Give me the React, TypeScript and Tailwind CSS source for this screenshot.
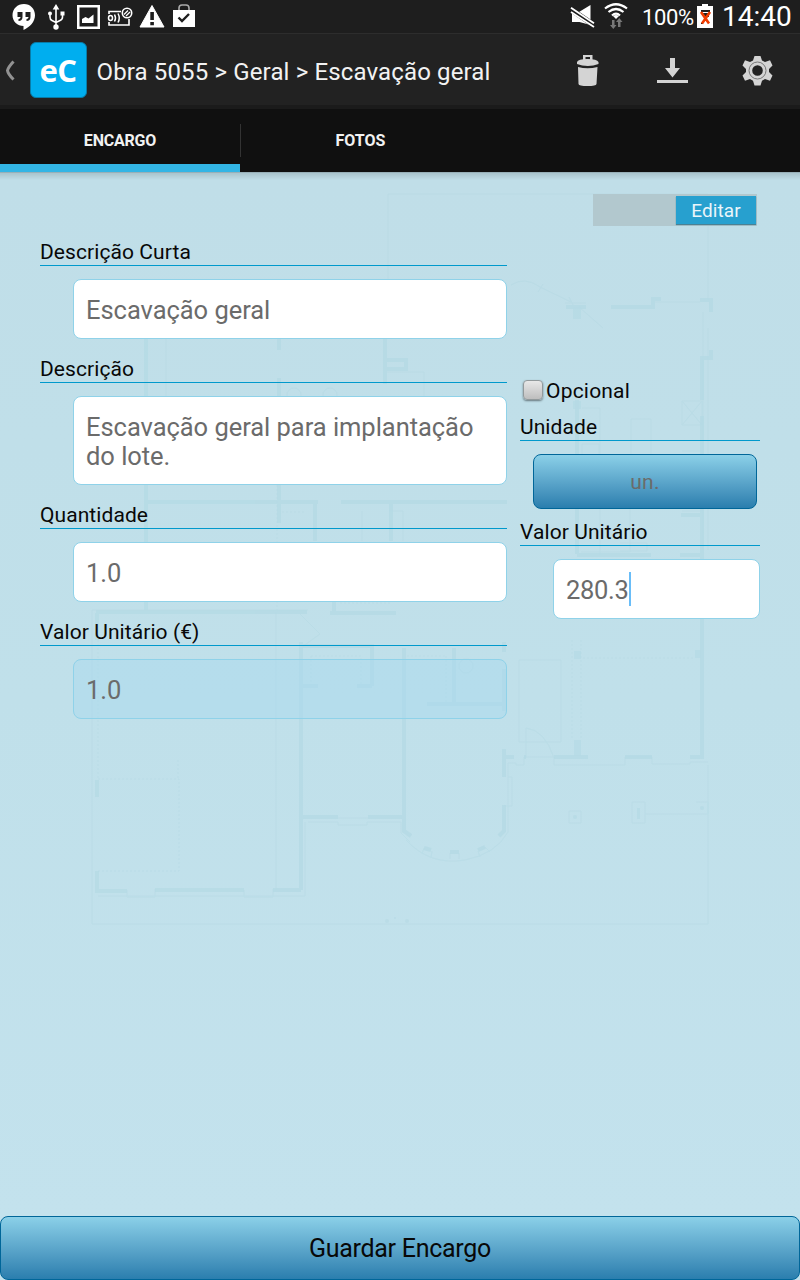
import React from "react";

function PlanBackdrop() {
  return (
    <svg
      className="pointer-events-none absolute left-0 top-0 opacity-75"
      width="800"
      height="1044"
      viewBox="0 172 800 1044"
      fill="none"
      stroke="#b2d9e4"
      aria-hidden="true"
    >
      <g strokeWidth="4" opacity="0.8">
        <path d="M146 339V612M146 502H318M341 502H507M96 612H307M97 613V640" />
        <path d="M279 339V350M279 378V396M279 485V523M385 339V384M385 360H406V369H386M315 502V541M391 502V541" />
        <path d="M334 602V612M330 613H396M301 642V890M302 646H372V686M302 686H318M357 686H372M404 648V831L411 836M454 648V704M427 704H502" />
        <path d="M302 817H338M368 817H404M97 780V797M97 871V891H127M155 890H244M273 890H301" />
        <path d="M504 642V652M504 669V711M504 749V777M504 805V831L499 836M504 757H514M524 757H526M554 757H588M625 757H652M690 757H702V416" />
        <path d="M566 307H586M611 307H653V299H661M700 300H711V312M711 350V358H702V400M577 555H651M680 555H702M681 515H702" />
        <path d="M577 400V554M424 848L431 850M450 852H459M478 850L485 847" />
      </g>
      <g fill="#b2d9e4" stroke="none" opacity="0.7">
        <path d="M573 307h8v12h-8zM574 651h7v8h-7zM695 650h6v8h-6zM574 740h7v16h-7zM573 401h8v8h-8zM637 808h3v11h-3z" />
        <circle cx="575" cy="817" r="2" />
        <circle cx="702" cy="808" r="2" />
      </g>
      <g strokeWidth="1" opacity="0.55">
        <path d="M388 194H708V300M388 194V279M708 765V924H92V610H308M166 339V396M276 612V890M389 511H403V541M362 511V541" />
        <path d="M308 822H338V825H367V822H401V833L410 842M508 832V763H516V765H524V757H554V765H588V765H625V757H652V764H690V762H708" />
        <path d="M338 818H368M127 890V897H155V889M244 890V897H273V889M98 896H305V822M508 777H512V806H504" />
        <path d="M511 285Q525 276 540 287L571 302M543 284l-5 8M579 307l24 21M569 297l4 8M565 303h21M655 302h45M703 312v238M708 328v222" />
        <path d="M582 408H600V555M631 419h20v72h-20zM682 401h20v24h-20zM682 401l20 24M702 401l-20 24M582 444h17v30h-17z" />
        <path d="M581 501H630V552H581M620 543h27v8h-27M682 451h20v60h-20M519 660h42v82h-42zM526 758V728Q545 730 554 758" />
        <path d="M569 811h12v12h-12zM632 802h13v21h-13zM696 802h12v12h-12M645 814H696" />
        <path d="M406 840Q430 866 465 860Q496 854 508 832M424 848l-2 6M432 851l-1 7M450 853v6M459 853v6M478 851l2 6M485 847l5 5" />
        <path d="M387 372h37v27h-37M300 614l20 20l-18 13" />
        <circle cx="294" cy="395" r="7" />
        <circle cx="330" cy="395" r="7" />
        <circle cx="466" cy="666" r="7" />
      </g>
      <g strokeWidth="1" strokeDasharray="2 2" opacity="0.5">
        <path d="M98 779H179V871H98M98 640V780M178 760v18M311 656H361V685M311 656V685M446 656V704M407 656H446M277 485V610M581 640V740M572 640V740M282 512H305M340 603H390M583 658H695" />
      </g>
      <g stroke="none" fill="#aed5e0" opacity="0.45">
        <circle cx="387" cy="921" r="2" />
        <circle cx="395" cy="918" r="1" />
        <circle cx="407" cy="921" r="2" />
      </g>
    </svg>
  );
}

function StatusBar() {
  return (
    <header className="flex h-[33px] shrink-0 items-center justify-between bg-[#1e1e1e] text-white">
      <svg width="200" height="33" viewBox="0 0 200 33" fill="#fff">
        <path d="M24 4C17.500 4 12.500 8.800 12.500 15.200C12.500 21.500 17.500 26 23.500 26V30C30 27 35 21.500 35 15.200C35 8.800 30.200 4 24 4Z" />
        <path d="M17.500 12h5v5c0 2.500-1.500 4-4 4v-2c1.300 0 2-.8 2-2h-3zM25.500 12h5v5c0 2.500-1.500 4-4 4v-2c1.300 0 2-.8 2-2h-3z" fill="#1e1e1e" />
        <g fill="none" stroke="#fff" strokeWidth="1.600">
          <path d="M56 8V26M50 14V17Q50 19.500 52 20.500L56 22.500M62.500 14V17Q62.500 19.500 60 20.500L56 22.500" />
        </g>
        <path d="M56 4l3.300 5.500h-6.600zM60.500 11.500h4v4h-4z" />
        <circle cx="50" cy="13.500" r="2" />
        <circle cx="56" cy="27" r="2.700" />
        <path fillRule="evenodd" d="M77 5h23v24H77zM79.500 7.500v19h18v-19z" />
        <path d="M82 23v-4l3.500-2 3 1.500 5-4V23z" />
        <g fill="none" stroke="#fff" strokeWidth="1.600">
          <path d="M121 11.500H109V14M109 22V25H129V19" />
          <ellipse cx="110.500" cy="18" rx="2" ry="2.500" strokeWidth="1.500" />
          <path d="M114.500 14.500q2 3.500 0 7M118 13.500q2.500 4.500 0 9" strokeWidth="1.500" />
          <circle cx="127" cy="13" r="4.700" />
          <path d="M124 14.500l4-4M126 16l4-4" strokeWidth="1.300" />
        </g>
        <path d="M152 5.500L164 27H140Z" strokeLinejoin="round" stroke="#fff" />
        <path d="M150.300 12h3.600v8h-3.600zM150.300 22h3.600v3.200h-3.600z" fill="#1e1e1e" />
        <path d="M173 10h22v17h-22z" />
        <path d="M179 10V8q0-3 3-3h4q3 0 3 3v2" fill="none" stroke="#aaa" strokeWidth="1.600" />
        <path d="M178.500 17.500l3.500 3.500 7-7" fill="none" stroke="#1e1e1e" strokeWidth="2.400" />
      </svg>
      <div className="flex h-full items-center font-[Roboto,sans-serif]">
        <svg width="68" height="33" viewBox="565 0 68 33" fill="#fff">
          <path d="M572 12h7L590.500 5v20l-11-3h-7.500z" />
          <path d="M571 9.500l22 15" stroke="#1e1e1e" strokeWidth="5.500" />
          <path d="M571 7.700l23 15.500M571 12l23 15" stroke="#fff" strokeWidth="1.900" />
          <g fill="none" stroke="#fff" strokeWidth="2.200">
            <path d="M605 8.500Q616 0 627 8.500M608.500 12Q616 6 623.500 12M612 15.500Q616 11.800 620 15.500" />
          </g>
          <path d="M616 19l-3-3q3-2 6 0z" />
          <path d="M612 20h2.500v5h2l-3.200 4-3.300-4h2zM618 27h2.500v-5h2l-3.200-4-3.300 4h2z" fill="#777" />
        </svg>
        <span className="ml-[9px] w-[53px] whitespace-nowrap pt-[2px] text-[22px] leading-8 tracking-[-0.35px]">100%</span>
        <svg className="ml-[2px]" width="16" height="33" viewBox="697 0 16 33">
          <path d="M697 6h5V4h6v2h5v22h-16z" fill="#fff" />
          <path d="M701 10h9v2h-9zM703 13h6v4h-6zM701 23h2v1h-2z" fill="#222" />
          <path d="M701 12l8 11.500M710 12l-8 11.500" stroke="#f03c00" strokeWidth="2.600" />
        </svg>
        <time className="ml-[9px] w-[78px] whitespace-nowrap text-[28px] leading-8">14:40</time>
      </div>
    </header>
  );
}

function ActionBar() {
  return (
    <div className="flex h-[76px] shrink-0 border-b-4 border-t border-b-[#1b1b1b] border-t-[#2d2d2d] bg-[#222]">
      <div className="flex h-full w-[96.500px] items-center">
        <svg width="29.500" height="70" viewBox="0 35 29.500 70">
          <path d="M13.500 61.500Q8 67.500 7.500 70.500Q8 74 13.500 79.500" fill="none" stroke="#929292" strokeWidth="3" />
        </svg>
        <div className="flex h-[56px] w-[57px] items-center justify-center rounded-[6px] border border-[#087ca8] bg-[#00aeef]">
          <span className="pt-px font-['Open_Sans',sans-serif] text-[31px] font-bold leading-none tracking-[-0.5px] text-white">eC</span>
        </div>
      </div>
      <h1 className="flex flex-1 items-center whitespace-nowrap pt-[5px] font-[Roboto,sans-serif] text-[24px] leading-8 tracking-[0.14px] text-[#f2f2f2]">
        Obra 5055 &gt; Geral &gt; Escavação geral
      </h1>
      <svg width="250" height="71" viewBox="550 34 250 71" fill="#d4d4d4">
        <path fillRule="evenodd" d="M583 60v-5h9.500v5zM585.500 57v2.500h4.500V57z" />
        <path d="M577 64v-2q1-3 10.500-3T598.500 62v2q-5 2-10.700 2T577 64zM578 67q9.500 2.500 19.500 0L596.500 84q-.3 2-9 2t-9-2z" />
        <path d="M670 58h5v10h5l-7.500 9.500L665 68h5zM657 80h31v3h-31z" />
        <path fillRule="evenodd" d="M754.500 56h6l1.500 4.500 3 1.500 5-1.800 2.500 5.300-3.500 3.500v3l3.500 3.500-2.500 5.300-5-1.800-3 1.700-1.500 4.700h-6L753 80.700l-3-1.700-5 1.800-2.500-5.300L746 72v-3l-3.500-3.500 2.500-5.300 5 1.800 3-1.500zM757.500 65.200a5.300 5.300 0 1 0 0 10.600a5.300 5.300 0 1 0 0-10.600z" />
        <circle cx="757.500" cy="70.500" r="8.500" fill="none" stroke="#777" strokeWidth="1" />
      </svg>
    </div>
  );
}

function TabBar() {
  return (
    <nav className="flex h-[63px] shrink-0 bg-[#101010] font-[Roboto,sans-serif] text-[16px] font-bold leading-5 text-[#f2f2f2]">
      <div className="flex w-[240px] items-center justify-center border-b-8 border-[#33b5e5] pt-[9px] tracking-[-0.2px]">ENCARGO</div>
      <div className="my-[15px] w-px bg-[#333]" />
      <div className="flex w-[239px] items-center justify-center pt-px">FOTOS</div>
    </nav>
  );
}

function Label({ children }: { children: React.ReactNode }) {
  return (
    <div className="h-[27px] whitespace-nowrap border-b border-[#0099cc] text-[21px] leading-[26px] tracking-[0.08px] text-[#080808]">{children}</div>
  );
}

function Field({ label, value, tall, disabled }: { label: string; value: string; tall?: boolean; disabled?: boolean }) {
  return (
    <div>
      <Label>{label}</Label>
      <div
        className={
          "mb-[17px] ml-[33px] mt-[13px] rounded-[8px] border border-[#8fd2e9] px-3 pt-4 text-[25.500px] leading-[29px] tracking-[-0.04px] text-[#6b6b6b] " +
          (tall ? "h-[89px] " : "h-[60px] ") +
          (disabled ? "bg-[#aad9ed]/50" : "bg-white")
        }
      >
        {value}
      </div>
    </div>
  );
}

export default function App() {
  return (
    <div className="flex h-[1280px] w-[800px] flex-col overflow-hidden bg-[#c2e1ec] font-[Roboto,sans-serif]">
      <StatusBar />
      <ActionBar />
      <TabBar />
      <main className="relative flex-1 bg-linear-to-b from-[#c0dee8] via-[#c0e0ea] to-[#c3e2ed]">
        <PlanBackdrop />
        <div className="absolute left-0 top-0 h-[8px] w-full border-t border-black/20 bg-linear-to-b from-black/12 to-transparent" />
        <div className="relative">
          <div className="flex justify-end pr-[43px] pt-[22px]">
            <div className="flex h-[32px] w-[164px] justify-end bg-[#b2c8ce] p-px">
              <div className="mt-px flex h-[28px] w-[80px] items-center justify-center bg-[#27a0cf] pt-[2px] text-[19px] tracking-[0.1px] text-[#eaf5fa] shadow-[0_1px_1px_#4b8194]">
                Editar
              </div>
            </div>
          </div>
          <div className="flex gap-[13px] px-10 pt-[13px]">
            <section className="w-[467px]">
              <Field label="Descrição Curta" value="Escavação geral" />
              <Field label="Descrição" value="Escavação geral para implantação do lote." tall />
              <Field label="Quantidade" value="1.0" />
              <Field label="Valor Unitário (€)" value="1.0" disabled />
            </section>
            <section className="w-[240px] pt-[136px]">
              <div className="flex h-[32px] items-center gap-[3px] pl-[3px] text-[21px] tracking-[0.2px] text-[#080808]">
                <span className="mb-[3px] h-[20px] w-[20px] rounded-[4px] border border-[#929a9c] bg-linear-to-b from-[#e8e8e8] to-[#bebebe] shadow-[0_1px_2px_#66777d]" />
                <span className="pt-px">Opcional</span>
              </div>
              <div className="mt-[7px]">
                <Label>Unidade</Label>
              </div>
              <div className="ml-[13px] mr-[3px] mt-[13px] flex h-[55px] items-center justify-center rounded-[8px] border border-[#006699] bg-linear-to-b from-[#8bd0e8] to-[#2a7eae] pt-[3px] text-[21px] tracking-[0.3px] text-[#6b6b6b]">
                un.
              </div>
              <div className="mt-[10px]">
                <Label>Valor Unitário</Label>
              </div>
              <div className="ml-[33px] mt-[13px] flex h-[60px] items-center rounded-[8px] border border-[#8fd2e9] bg-white pl-3 text-[25.500px] tracking-[-0.3px] text-[#6b6b6b]">
                <span className="pt-[3px]">280.3</span>
                <span className="h-[34px] w-[2px] bg-[#69bdf8]" />
              </div>
            </section>
          </div>
        </div>
      </main>
      <button className="h-[64px] shrink-0 rounded-[8px] border border-[#006699] bg-linear-to-b from-[#8bd0e8] to-[#2a7eae] pt-[2px] text-[25px] leading-8 tracking-[-0.27px] text-[#080808]">
        Guardar Encargo
      </button>
    </div>
  );
}
